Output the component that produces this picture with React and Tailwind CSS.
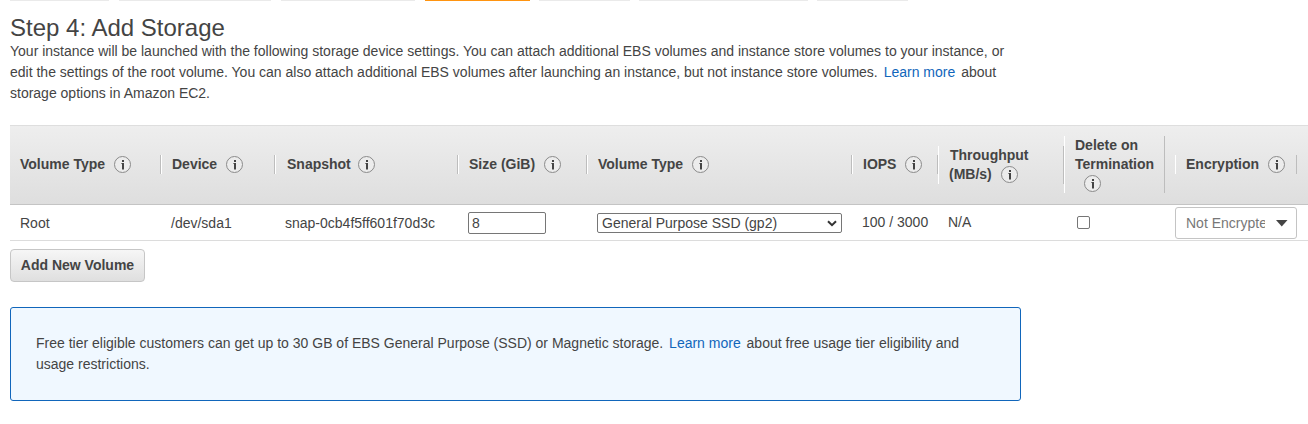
import React from "react";

const GRID =
  "grid grid-cols-[151px_114px_183px_129px_265px_86px_126px_111px_122px_11px]";

function Info({ className = "ml-[9px]" }) {
  return (
    <svg
      width="17"
      height="17"
      viewBox="0 0 17 17"
      className={`inline-block shrink-0 ${className}`}
    >
      <circle cx="8.5" cy="8.5" r="8" fill="#ececec" stroke="#8a8a8a" strokeWidth="1" />
      <path d="M8 4h2v2h-2zM8 7h2v6.5h-2z" fill="#444" />
      <path d="M7 7h1v1h-1z" fill="#888" />
    </svg>
  );
}

function Head({ label, first, gap, className = "pl-[10px]" }) {
  return (
    <div
      className={`-mt-px flex h-[19px] items-center border-r border-r-[#bdbdbd] whitespace-nowrap ${
        first ? "" : "border-l border-l-white"
      } ${className}`}
    >
      {label}
      <Info className={gap} />
    </div>
  );
}

export default function App() {
  return (
    <div className="h-[424px] w-[1308px] overflow-hidden bg-white font-['Liberation_Sans',Arial,sans-serif] text-[14px] leading-[21px] text-[#444]">
      <div className="flex h-px pl-[10px]">
        <div className="mr-[10px] w-[99px] bg-[#eaeaea]" />
        <div className="mr-[10px] w-[152px] bg-[#eaeaea]" />
        <div className="mr-[10px] w-[134px] bg-[#eaeaea]" />
        <div className="mr-[9px] w-[105px] bg-[#ff9410]" />
        <div className="mr-[9px] w-[91px] bg-[#eaeaea]" />
        <div className="mr-[9px] w-[169px] bg-[#eaeaea]" />
        <div className="w-[91px] bg-[#eaeaea]" />
      </div>

      <h1 className="mt-[14px] ml-[10px] h-[26px] text-[24px] leading-[25px]">Step 4: Add Storage</h1>
      <p className="ml-[10px] h-[84px] whitespace-nowrap">
        Your instance will be launched with the following storage device settings. You can attach additional EBS volumes and instance store volumes to your instance, or
        <br />
        edit the settings of the root volume. You can also attach additional EBS volumes after launching an instance, but not instance store volumes.{" "}
        <a className="mr-[2px] ml-[2px] text-[#1166bb]">Learn more</a> about
        <br />
        storage options in Amazon EC2.
      </p>

      <div className="ml-[10px]">
        <div
          className={`${GRID} h-20 items-center border-t border-b border-t-[#dedede] border-b-[#c4c4c4] bg-linear-to-b from-[#eeeeee] to-[#dedede] font-bold leading-[19px]`}
        >
          <Head first label="Volume Type" />
          <Head label="Device" />
          <Head label="Snapshot" gap="ml-[7px]" className="pl-[11px]" />
          <Head label="Size (GiB)" />
          <Head label="Volume Type" />
          <Head label="IOPS" />
          <div className="h-[38px] border-r border-l border-r-[#bdbdbd] border-l-white pl-[10px]">
            <div className="flex h-[19px] items-center pl-px">Throughput</div>
            <div className="flex h-[19px] items-center">
              (MB/s)
              <Info />
            </div>
          </div>
          <div className="-mt-px mr-[10px] h-[57px] border-r border-l border-r-[#bdbdbd] border-l-white pl-[10px]">
            <div className="flex h-[19px] items-center">Delete on</div>
            <div className="flex h-[19px] items-center">Termination</div>
            <div className="flex h-[19px] items-center">
              <Info />
            </div>
          </div>
          <Head label="Encryption" />
        </div>

        <div className={`${GRID} h-9 items-center border-b border-[#dcdcdc]`}>
          <div className="mt-px pl-[10px]">Root</div>
          <div className="mt-px pl-[10px]">/dev/sda1</div>
          <div className="mt-px pl-[10px]">snap-0cb4f5ff601f70d3c</div>
          <div className="ml-[10px] flex h-[22px] w-[78px] items-center rounded-[2px] border border-[#767676] bg-white pt-px pl-[3px]">
            8
          </div>
          <div className="ml-[10px] flex h-[20px] w-[245px] items-center rounded-[2px] border border-[#767676] bg-white pt-px pr-[4px] pl-[4px]">
            General Purpose SSD (gp2)
            <svg className="ml-auto" width="10" height="7" viewBox="0 0 10 7">
              <path d="M1 1.2l4 4 4-4" fill="none" stroke="#333" strokeWidth="2" />
            </svg>
          </div>
          <div className="-mt-px pl-[10px] whitespace-nowrap">100 / 3000</div>
          <div className="-mt-px pl-[10px]">N/A</div>
          <div className="ml-[13px] h-[13px] w-[13px] rounded-[2px] border border-[#767676] bg-white" />
          <div className="flex h-8 w-[122px] items-center rounded-[3px] border border-[#c4c4c4] bg-white pt-px pl-[10px] text-[#777]">
            <span className="w-[79px] overflow-hidden whitespace-nowrap">Not Encrypted</span>
            <svg className="ml-[11px]" width="12" height="7" viewBox="0 0 12 7">
              <path d="M0 0h11.5L5.75 6.5z" fill="#444" />
            </svg>
          </div>
        </div>

        <button className="mt-2 block h-[33px] w-[135px] rounded-[4px] border border-[#c6c6c6] bg-linear-to-b from-[#f6f6f6] to-[#dfdfdf] text-center font-bold leading-[21px] whitespace-nowrap">
          Add New Volume
        </button>

        <div className="mt-[25px] h-[94px] w-[1011px] rounded-[3px] border border-[#1166bb] bg-[#f0f8ff] pt-[25px] pl-[25px] whitespace-nowrap">
          Free tier eligible customers can get up to 30 GB of EBS General Purpose (SSD) or Magnetic storage.{" "}
          <a className="mr-[2px] ml-[2px] text-[#1166bb]">Learn more</a> about free usage tier eligibility and
          <br />
          usage restrictions.
        </div>
      </div>
    </div>
  );
}
